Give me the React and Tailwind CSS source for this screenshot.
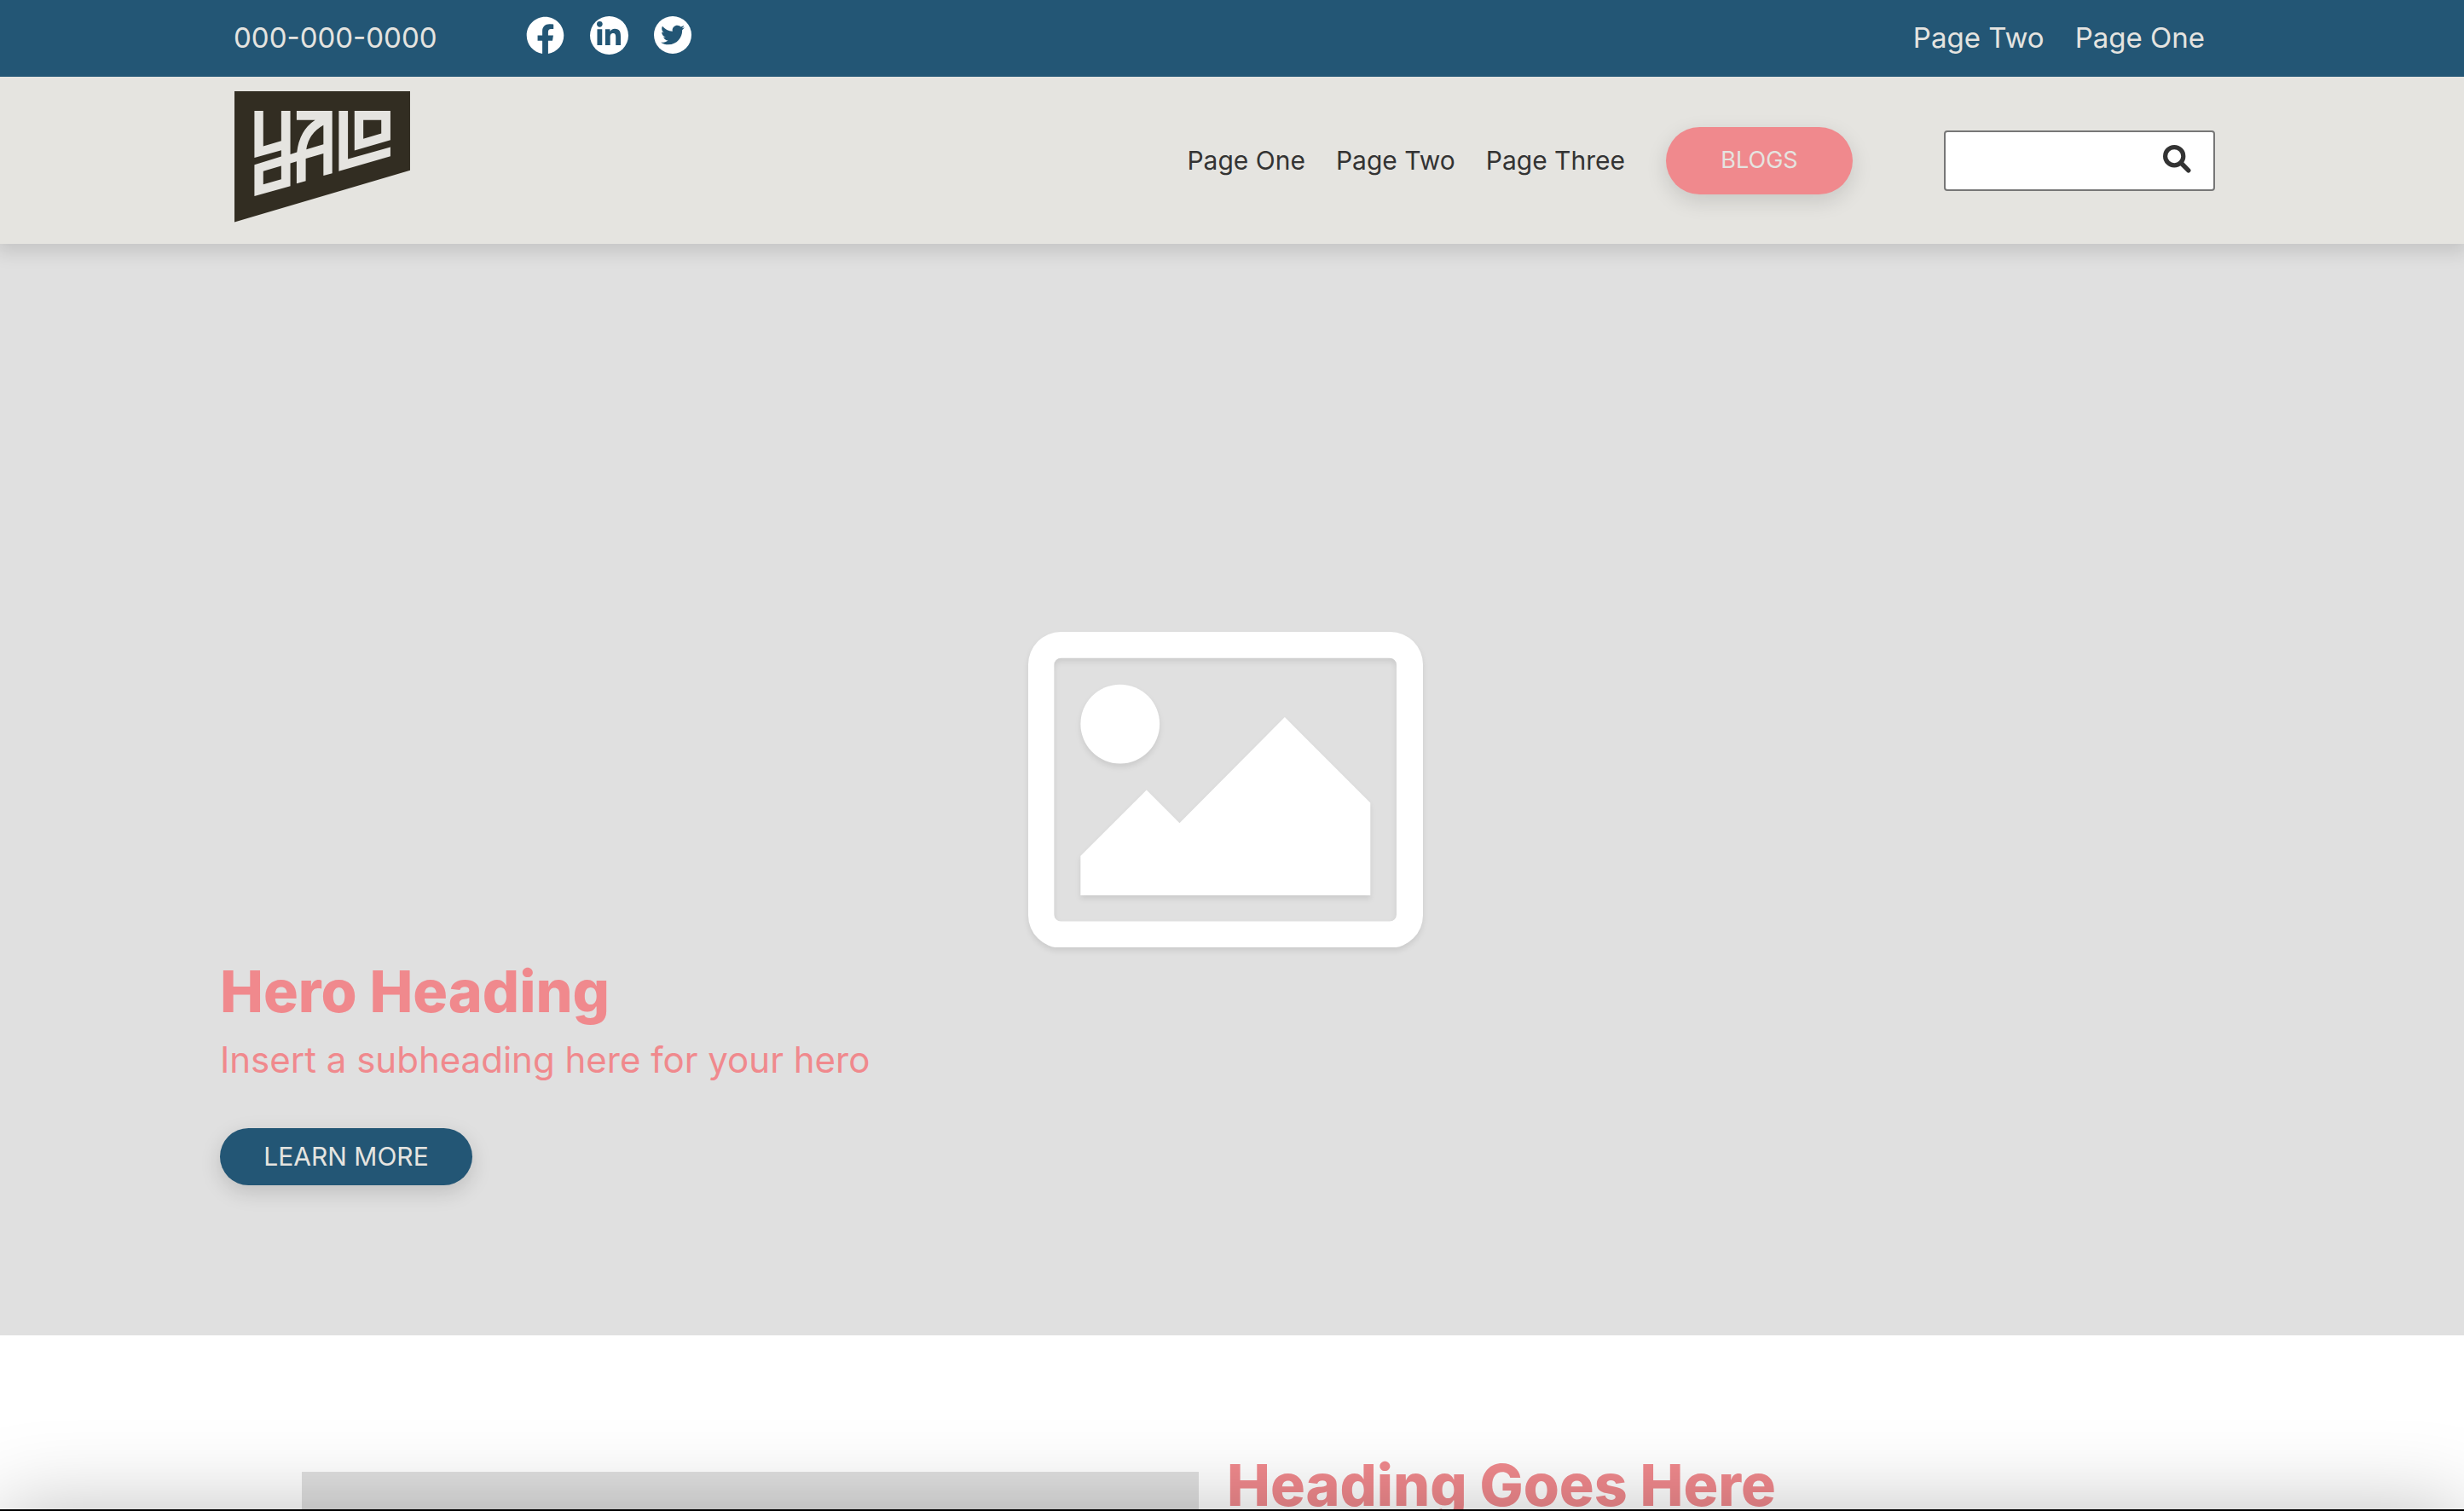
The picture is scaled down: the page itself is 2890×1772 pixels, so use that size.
import React from "react";
import { FaFacebook, FaLinkedinIn, FaTwitter } from "react-icons/fa";

function Logo() {
  return (
    <svg viewBox="46 37 616 459" className="w-[206px]" role="img" aria-label="Yalo">
      <path fill="#322d22" d="M46 37H662V314L46 496Z" />
      <g fill="#e5e4e0" fillRule="evenodd">
        <path d="M116 106H147V230L210 211V106H242V258L265 251Q274 174 329 138H264V106H389V325L358 333V255L296 273V352L264 361V283L242 290V370L116 405V295L210 266V244L116 270ZM147 317V364L210 346V299ZM298 241L358 223V156Q306 185 298 241Z" />
        <path d="M412 106H444V275L593 233V265L412 317Z" />
        <path d="M467 106H593V208L467 245ZM498 138V204L561 185V138Z" />
      </g>
    </svg>
  );
}

function ImagePlaceholder() {
  return (
    <svg
      viewBox="78 94 1388 1111"
      className="w-[463px] drop-shadow-[0_4px_3px_rgba(0,0,0,0.09)]"
      fill="#ffffff"
      aria-hidden="true"
    >
      <path
        fillRule="evenodd"
        d="M193 94H1351A115 115 0 0 1 1466 209V1090A115 115 0 0 1 1351 1205H193A115 115 0 0 1 78 1090V209A115 115 0 0 1 193 94ZM193 186A24 24 0 0 0 169 210V1088A24 24 0 0 0 193 1112H1349A24 24 0 0 0 1373 1088V210A24 24 0 0 0 1349 186Z"
      />
      <circle cx="401" cy="418" r="139" />
      <path d="M262 882L494 650L610 766L980 394L1281 695V1020H262Z" />
    </svg>
  );
}

function SearchIcon() {
  return (
    <svg viewBox="0 0 33 33" className="size-[33px]" fill="none" stroke="#333333" aria-hidden="true">
      <circle cx="13.2" cy="13.2" r="10.6" strokeWidth="5.2" />
      <path d="M22.5 22.5L29.8 29.8" strokeWidth="5.4" strokeLinecap="round" />
    </svg>
  );
}

function TopBar() {
  return (
    <div className="relative z-10 bg-[#235675] text-[#e5e4e0]">
      <div className="mx-auto flex h-[90px] w-full max-w-[2374px] items-center pr-[46px] pl-4 text-[33px]">
        <a href="tel:0000000000">000-000-0000</a>
        <div className="mb-2 ml-[104px] flex items-center gap-[30px] text-[#235675]">
          <a href="#facebook" aria-label="Facebook" className="text-white">
            <FaFacebook className="size-[45px]" />
          </a>
          <a href="#linkedin" aria-label="LinkedIn" className="flex size-[45px] items-center justify-center rounded-full bg-white">
            <FaLinkedinIn className="size-8" />
          </a>
          <a href="#twitter" aria-label="Twitter" className="flex size-[44px] items-center justify-center rounded-full bg-white">
            <FaTwitter className="size-7" />
          </a>
        </div>
        <nav aria-label="Secondary" className="ml-auto flex gap-9">
          <a href="#two">Page Two</a>
          <a href="#one">Page One</a>
        </nav>
      </div>
    </div>
  );
}

function Header() {
  return (
    <header className="relative bg-[#e5e4e0] shadow-[0_6px_20px_4px_rgba(0,0,0,0.12)]">
      <div className="mx-auto flex h-[196px] w-full max-w-[2374px] items-center pr-[34px] pl-[17px]">
        <a href="#home" className="mb-2">
          <Logo />
        </a>
        <nav aria-label="Main" className="ml-auto flex items-center gap-9 text-[30px] text-[#333333]">
          <a href="#one">Page One</a>
          <a href="#two">Page Two</a>
          <a href="#three">Page Three</a>
        </nav>
        <button
          type="button"
          className="ml-12 h-[79px] w-[219px] rounded-full bg-[#f0898d] text-[27px] text-[#e5e4e0] shadow-[0_8px_24px_rgba(0,0,0,0.13)]"
        >
          BLOGS
        </button>
        <form role="search" className="ml-[107px] flex h-[71px] w-[318px] items-center rounded-[4px] border-2 border-[#777777] bg-white pr-[26px]">
          <input type="text" aria-label="Search" className="h-full min-w-0 flex-1 px-4 text-[27px] outline-none" />
          <button type="button" aria-label="Submit search" className="mb-1">
            <SearchIcon />
          </button>
        </form>
      </div>
    </header>
  );
}

function Hero() {
  return (
    <section className="grid min-h-[1280px] bg-[#e0e0e0]">
      <div className="mr-4 place-self-center [grid-area:1/1]">
        <ImagePlaceholder />
      </div>
      <div className="mx-auto flex w-full max-w-[2374px] flex-col items-start self-end pb-44 [grid-area:1/1]">
        <h1 className="text-[68px] leading-[78px] font-extrabold text-[#f0898d]">Hero Heading</h1>
        <p className="mt-3 text-[42px] leading-[60px] text-[#f0898d]">Insert a subheading here for your hero</p>
        <button
          type="button"
          className="mt-[50px] h-[67px] w-[296px] rounded-full bg-[#235675] text-[30px] text-[#e5e4e0] shadow-[0_8px_24px_rgba(0,0,0,0.15)]"
        >
          LEARN MORE
        </button>
      </div>
    </section>
  );
}

function Feature() {
  return (
    <section className="mx-auto grid w-full max-w-[2182px] grid-cols-[1052px_1fr] gap-[33px] pt-40">
      <div className="h-[600px] bg-[#e0e0e0]" />
      <h2 className="-mt-6 text-[68px] leading-[78px] font-extrabold text-[#f0898d]">Heading Goes Here</h2>
    </section>
  );
}

export default function App() {
  return (
    <div className="relative h-screen overflow-hidden bg-white font-[Inter,sans-serif]">
      <TopBar />
      <Header />
      <Hero />
      <Feature />
      <div className="pointer-events-none absolute inset-x-0 top-full -mt-[2px] h-[200px] bg-black shadow-[0_0_100px_rgba(0,0,0,0.25)]" />
    </div>
  );
}
